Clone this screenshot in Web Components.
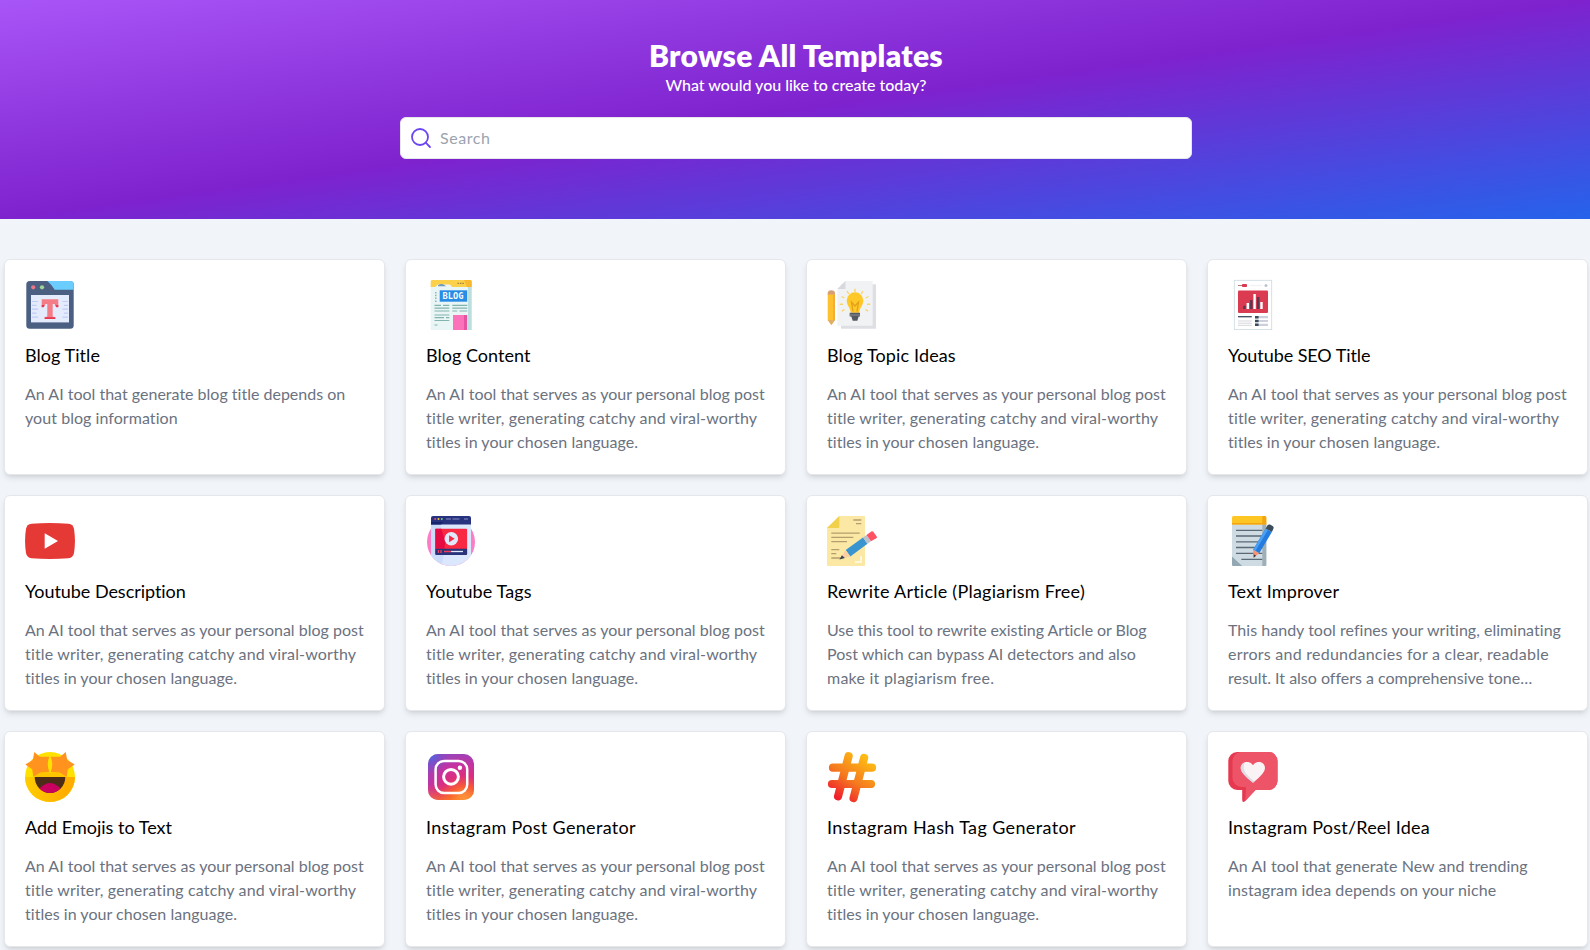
<!DOCTYPE html>
<html lang="en">
<head>
<meta charset="utf-8">
<title>Browse All Templates</title>
<style>
  html, body { margin: 0; height: 100%; overflow: hidden; }
  body { background: #f1f5f9; font-family: Lato, "Open Sans", sans-serif; font-size: 16px; line-height: 24px; }
</style>
</head>
<body>
<templates-page></templates-page>

<script>
/* One line of text, tracked so that it fills the given width. */
class FitLine extends HTMLElement {
  constructor() {
    super();
    this.attachShadow({ mode: 'open' }).innerHTML =
      '<style>:host{display:block;white-space:nowrap}span{display:inline-block;font-kerning:normal}</style><span><slot></slot></span>';
  }
  connectedCallback() {
    const span = this.shadowRoot.querySelector('span');
    const target = parseFloat(this.getAttribute('width'));
    const n = this.textContent.length;
    span.style.letterSpacing = '0.001px';
    const natural = span.getBoundingClientRect().width;
    const step = (target + 1 - natural) / n;
    span.style.letterSpacing = step.toFixed(3) + 'px';
  }
}

const ICONS = {
  title: `<rect x="1.3" y="1" width="47.4" height="47.7" rx="3.5" fill="#4a5f82"/>
    <path d="M22.3 1H45.5a3.2 3.2 0 0 1 3.2 3.2V9.7H29.7Q26.5 4.5 22.3 1Z" fill="#6bcdfd"/>
    <circle cx="8.2" cy="7.3" r="2.1" fill="#ed7685"/><circle cx="17" cy="7.3" r="2.1" fill="#9fd694"/>
    <rect x="6" y="15" width="38" height="27.4" fill="#e4ebfc"/>
    <path d="M7 21.5h6M7 25.3h4.5M7 29.2h6M7 33.2h4.5M7 37.2h6M37.5 21.5H43M39 25.3h4M37.5 29.2H43M39 33.2h4M37.5 37.2H43" stroke="#bfcdf5" stroke-width="1.2"/>
    <path d="M16.7 19.3H33.3V27H31L29.5 24H27.7V36.5L30.3 37.3V39H19.7V37.3L22.3 36.5V24H20.5L19 27H16.7Z" fill="#f37c86"/>
    <path d="M16.7 25h2.8l-.8 2.3h-2zM33.3 25h-2.8l.8 2.3h2zM19.7 37.2h10.6V39H19.7z" fill="#e63950"/>`,
  content: `<path d="M4.7 4H45.7V50H4.7z" fill="#eaf5f5"/><path d="M42 5h3.7v45H42z" fill="#bddedf"/>
    <path d="M6 0H44.2a1.5 1.5 0 0 1 1.5 1.5V7H26L24 4.5H12L9 7H4.7V1.5A1.5 1.5 0 0 1 6 0Z" fill="#fbd04a"/><path d="M38 0h6.2a1.5 1.5 0 0 1 1.5 1.5V7H41z" fill="#f9b92e"/>
    <path d="M12 5.2q4-3 8 1h-8z" fill="#6f9ab7" transform="translate(0 0)"/><path d="M31.5 3.4h7" stroke="#a7873a" stroke-width="1.3" stroke-dasharray="1.6 .8"/>
    <rect x="13.7" y="10.3" width="27.5" height="11.4" fill="#288be4"/>
    <text x="16.6" y="19.2" font-family="DejaVu Sans Mono" font-weight="700" font-size="8.8" textLength="21" lengthAdjust="spacingAndGlyphs" fill="#f4faff">BLOG</text>
    <path d="M9.8 12v10" stroke="#8eb2b6" stroke-width="1.5" stroke-dasharray="1.5 1.3"/>
    <path d="M8.5 25.4h6.5M17 25.4h6.3M8.5 28.2h14.8M8.5 31h14.8M26.3 25.4h15M26.3 28.2h15M26.3 31h5M33.5 31h7.8M8.5 35h14.8M8.5 37.7h9.5M20 37.7h3.3M8.5 40.5h14.8M8.5 45h3" stroke="#82b3ae" stroke-width="1.2"/>
    <path d="M27 35H41V50H27z" fill="#fb72ba"/><path d="M38 35h3.2v15H38z" fill="#e653a0"/>`,
  ideas: `<path d="M14 4.3H49V48.7H14z" fill="#dedfe3"/>
    <path d="M18.5 1H45.7V45.7H10.3V9z" fill="#f1f2f4"/><path d="M18.5 1V9H10.3z" fill="#d8d9de"/>
    <path d="M.7 14h7.3v26L4.4 45 .7 40z" fill="#fdc02f"/><path d="M.7 14.5v-1a3.65 3.3 0 0 1 7.3 0v1z" fill="#d4a074"/><path d="M.7 40H8L4.4 45z" fill="#e0ad68"/><path d="M6 15h2v25H6z" fill="#f6ac35"/>
    <path d="M19.7 20.5a8.3 8.3 0 0 1 16.6 0c0 5-3.6 7-4.1 12.2h-8.4c-.5-5.2-4.1-7.2-4.1-12.2z" fill="#ffc829"/>
    <path d="M26 31.5l-1.5-9.5 3.5 4 3.5-4-1.5 9.5" fill="none" stroke="#e5a018" stroke-width="1.3"/>
    <path d="M22.7 32.7H33v3.8h-1.3l-1.4 4.2h-4.6l-1.4-4.2h-1.6z" fill="#555960"/><path d="M22.7 35h10.3" stroke="#8b8f94"/>
    <path d="M28 12.2V8.7M21.8 14l-1.7-2.8M34.2 14l1.7-2.8M17.3 18l-2.8-1.5M38.7 18l2.8-1.5M16 24.2h-3.3M40 24.2h3.3M17.5 29.5l-2.6 1.7M38.5 29.5l2.6 1.7" stroke="#fbd36d" stroke-width="1.4"/>`,
  seo: `<rect x="6.3" y=".3" width="37.4" height="49.3" fill="#fff" stroke="#cbdbe2" stroke-width=".8"/>
    <path d="M10 5.5h4" stroke="#b47880" stroke-width="1"/><rect x="14" y="4" width="5" height="3" rx=".8" fill="#db3b51"/><path d="M22 5.5h12" stroke="#f1f1f4" stroke-width="1.2"/><circle cx="38" cy="5.5" r="1.5" fill="#bcc4cd"/>
    <rect x="10" y="10.5" width="30" height="22.5" rx="1" fill="#db3b51"/>
    <path d="M15.2 25.7h2.4V29h-2.4zM22.1 20h2.4v9h-2.4zM28.9 17h2.5v12h-2.5z" fill="#56394f"/><path d="M18.6 23H21v6h-2.4zM25.4 14h2.4v15h-2.4zM32.3 22h2.4v7h-2.4z" fill="#fff"/>
    <path d="M10 36.7h13.8" stroke="#3b4c5d" stroke-width="1.3"/><path d="M10 41h13.8M10 43.2h13.8M10 45.3h13.8" stroke="#d6d7dc" stroke-width="1"/>
    <path d="M27 37.2h13M27 41h13M27 44.8h13" stroke="#ccd0da" stroke-width="2.2"/><path d="M27 37.2h3.6M27 41h3.6M27 44.8h3.6" stroke="#394c60" stroke-width="2.4"/>`,
  youtube: `<path d="M6.5 7.8Q25 6.2 43.5 7.8Q48.2 8.4 49 13Q50.9 25 49 37Q48.2 41.6 43.5 42.2Q25 43.8 6.5 42.2Q1.8 41.6 1 37Q-.9 25 1 13Q1.8 8.4 6.5 7.8Z" fill="#e53935"/><path d="M19.7 17.3 33 25 19.7 32.7Z" fill="#fff"/>`,
  tags: `<circle cx="25" cy="26" r="24" fill="#fb7dc5"/>
    <path d="M5 7H45V39.2A24 24 0 0 1 5 39.2z" fill="#dae7fc"/><path d="M5 39A24 24 0 0 0 16 48.2L19 30 14 7H5z" fill="#cbdcfa"/>
    <path d="M7 0H43a2 2 0 0 1 2 2V8.6H5V2A2 2 0 0 1 7 0Z" fill="#28337f"/><path d="M5 6H17.5L15 8.6H5Z" fill="#16246d"/>
    <circle cx="9.2" cy="3" r="1" fill="#ef476f"/><circle cx="12.5" cy="3" r="1" fill="#f7c94c"/><circle cx="15.8" cy="3" r="1" fill="#73ce78"/><path d="M20 3h5M26.5 3h7M38 3h4" stroke="#6870ad" stroke-width="1.3"/>
    <rect x="9.3" y="12.7" width="31.8" height="26" rx="1" fill="#f92843"/><path d="M9.3 12.7h6l4 13-1 7h-9z" fill="#e60a43"/><path d="M9.3 32.8H41.1V38a1 1 0 0 1-1 .9H10.3a1 1 0 0 1-1-.9z" fill="#283379"/>
    <circle cx="25.3" cy="22.8" r="6.8" fill="#e0e9fb"/><path d="M23.1 19.3 28.7 22.8 23.1 26.2Z" fill="#f92843"/>
    <path d="M12.5 34v3M15 34v3M18 35.5h7" stroke="#ee405e" stroke-width="1.3"/><path d="M25 35.5h12" stroke="#e0e9fb" stroke-width="1.3"/>`,
  rewrite: `<path d="M12.3 0H37a1 1 0 0 1 1 1V49a1 1 0 0 1-1 1H1a1 1 0 0 1-1-1V12z" fill="#fbe8a5"/><path d="M12.3 0V11a1 1 0 0 1-1 1H0z" fill="#f1d04c"/>
    <path d="M26.3 4h8M29 7.7h5.3M4.3 17.2h28.4M4.3 21.4h22M4.3 25.7H20M4.3 33.7h8M4.3 37.7h5M4.3 42H14" stroke="#b39e6d" stroke-width="1.3"/><path d="M34 40v6h-6" fill="none" stroke="#fdf7dc" stroke-width="2"/>
    <path d="M18.7 34 36 21.5 40.5 27.8 23.3 40.4Z" fill="#3994d0"/><path d="M36 21.5 39.5 19 44 25.3 40.5 27.8Z" fill="#b9c1cb"/><path d="M39.5 19 44.3 15.5Q45.5 14.7 46.3 15.8L49.7 20.5Q50.4 21.5 49.2 22.3L44 25.3Z" fill="#ff5263"/>
    <path d="M18.7 34 23.3 40.4 12.5 43.4Z" fill="#fbcfa2"/><path d="M14.9 39.2 17.8 42 12.5 43.5Z" fill="#354449"/>`,
  improve: `<path d="M4 6H38.3V49a1 1 0 0 1-1 1H12L4 42z" fill="#cfdbe2"/><path d="M34.3 8h4v41a1 1 0 0 1-1 1h-3z" fill="#9eafb8"/><path d="M4 40.5 14.2 50H5a1 1 0 0 1-1-1z" fill="#93a8b3"/>
    <path d="M5.5 0H36.8a1.5 1.5 0 0 1 1.5 1.5V8.4H4V1.5A1.5 1.5 0 0 1 5.5 0Z" fill="#fdc623"/><path d="M34.3 0h2.5a1.5 1.5 0 0 1 1.5 1.5V8.4h-4zM4 7h34v1.4H4z" fill="#f5a411"/>
    <path d="M8 14.3h26.3M8 20h26.3M8 25.8h26.3M8 31.5h26.3M8 37.3h26.3M13.3 43.3h21" stroke="#596a76" stroke-width="1.3"/>
    <path d="M37.7 12.5 43.9 16 31.2 37.3 25.1 33.8Z" fill="#257cdf"/><path d="M37.7 12.5 40 13.8 27.4 35.1 25.1 33.8Z" fill="#4ca0f1"/><path d="M37.7 12.5 39.5 9.3Q40.4 8 42 8.6L44.6 10.1Q46.1 11 45.5 12.5L43.9 16Z" fill="#3b4d5b"/>
    <path d="M25.1 33.8 31.2 37.3 25.8 41.4Z" fill="#f69475"/><path d="M25.6 38.3 28.1 39.7 25.7 41.7Z" fill="#41343a"/>`,
  emoji: `<defs><linearGradient id="f" x1="0" y1="0" x2="1" y2="0"><stop offset="0" stop-color="#ffcd00"/><stop offset=".8" stop-color="#ffae00"/></linearGradient></defs>
    <circle cx="25" cy="25" r="25" fill="#ffe100"/><path d="M0 25A25 25 0 0 0 50 25Z" fill="url(#f)"/><path d="M9 25 16 20.4H34L41 25Z" fill="#ffc400"/>
    <g fill="#ff931e"><path d="M9.3 0 14.8 4.7 24.3 4.7Q21.2 12 24.3 20L15.5 20.4 8.3 25 7.2 17.3.3 12.5 7.8 8Z"/><path d="M40.7 0 35.2 4.7 25.7 4.7Q28.8 12 25.7 20L34.5 20.4 41.7 25 42.8 17.3 49.7 12.5 42.2 8Z"/></g>
    <path d="M9.7 25H40.3A15.3 16 0 0 1 9.7 25Z" fill="#4c2b17"/><path d="M14.5 36.5Q25 25.5 35.5 36.5Q31 41 25 41Q19 41 14.5 36.5Z" fill="#c8005f"/>`,
  instagram: `<defs><radialGradient id="g" gradientUnits="userSpaceOnUse" cx="38" cy="49" r="48"><stop offset="0" stop-color="#ffd06e"/><stop offset=".12" stop-color="#ffa944"/><stop offset=".3" stop-color="#f85c34"/><stop offset=".52" stop-color="#dd2e7c"/><stop offset=".76" stop-color="#c632a0"/><stop offset="1" stop-color="#9a44b8"/></radialGradient>
    <linearGradient id="o" x1="0" y1="1" x2="0" y2="0"><stop offset="0" stop-color="#fb7a25"/><stop offset=".35" stop-color="#f0503f" stop-opacity="0"/></linearGradient>
    <radialGradient id="b" gradientUnits="userSpaceOnUse" cx="3" cy="2" r="20"><stop offset="0" stop-color="#3770ed"/><stop offset="1" stop-color="#8046c7" stop-opacity="0"/></radialGradient></defs>
    <rect x="2" y="2" width="46" height="46" rx="10" fill="url(#g)"/><rect x="2" y="2" width="46" height="46" rx="10" fill="url(#o)" opacity=".7"/><rect x="2" y="2" width="46" height="46" rx="10" fill="url(#b)"/>
    <g fill="none" stroke="#fff"><rect x="9.6" y="9" width="31.6" height="32" rx="8.5" stroke-width="2.5"/><circle cx="25" cy="24.8" r="7.4" stroke-width="3"/></g><circle cx="33.9" cy="15.8" r="2.2" fill="#fff"/>`,
  hashtag: `<defs><linearGradient id="h" gradientUnits="userSpaceOnUse" x1="38" y1="5" x2="10" y2="45"><stop offset="0" stop-color="#fdbb13"/><stop offset=".55" stop-color="#f5791f"/><stop offset="1" stop-color="#ef202d"/></linearGradient></defs>
    <path d="M6 15.7H45M5 32H44M21.6 4.2 11.1 44.2M37.1 6 26.6 46" fill="none" stroke="url(#h)" stroke-width="8.2" stroke-linecap="round"/>`,
  reel: `<path d="M9 0H40.5a9 9 0 0 1 9 9V29a9 9 0 0 1-9 9H27.5L17 49.3Q14.3 51 14.2 48V38H9.3a9 9 0 0 1-9-9V9A9 9 0 0 1 9 0Z" fill="#e63950"/>
    <path d="M12 0H40.5a9 9 0 0 1 9 9V29a9 9 0 0 1-9 9H27.5L17.2 49Q18 39 17.8 35H13.5a9 9 0 0 1-9-9V9Q5 2 12 0Z" fill="#ee5468"/>
    <path d="M25 30.7Q12.7 21.5 12.7 16.3C12.7 9.5 21.5 8 25 13.3C28.5 8 37 9.5 37 16.3Q37 21.5 25 30.7Z" fill="#faf3f5"/><path d="M25 30.7Q12.7 21.5 12.7 16.3Q12.9 12 16.6 10.5C13 19 20 24 26.5 29.5Z" fill="#dedbe3"/>`
};

class ToolIcon extends HTMLElement {
  constructor() { super(); this.attachShadow({ mode: 'open' }); }
  connectedCallback() {
    this.shadowRoot.innerHTML = `<style>:host{display:block;width:50px;height:50px}svg{display:block;overflow:visible}</style>
      <svg width="50" height="50" viewBox="0 0 50 50" aria-hidden="true">${ICONS[this.getAttribute('name')]}</svg>`;
  }
}

class TemplateCard extends HTMLElement {
  constructor() {
    super();
    this.attachShadow({ mode: 'open' }).innerHTML = `<style>
      :host{display:flex;flex-direction:column;box-sizing:border-box;height:216px;padding:20px;background:#fff;border:1px solid #e5e7eb;border-radius:6px;
        box-shadow:0 4px 6px -1px rgba(0,0,0,.1),0 2px 4px -2px rgba(0,0,0,.1);cursor:pointer}
      h2{margin:11px 0 13px;font-size:18px;line-height:28px;font-weight:400;color:#000}
      .desc{color:#6b7280;line-height:24px}
      </style><slot name="icon"></slot><h2><slot name="title"></slot></h2><div class="desc"><slot></slot></div>`;
  }
}

class SearchHero extends HTMLElement {
  constructor() {
    super();
    this.attachShadow({ mode: 'open' }).innerHTML = `<style>
      :host{display:flex;flex-direction:column;align-items:center;box-sizing:border-box;height:219px;padding:37px 0 0 2px;color:#fff;
        background:linear-gradient(to bottom right,#a855f7,#7e22ce,#2563eb)}
      h1{margin:0;font-size:30px;line-height:36px;font-weight:800}
      p{margin:0 0 20px;font-weight:500}
      .box{display:flex;align-items:center;gap:7px;box-sizing:border-box;width:792px;height:42px;padding:8px;background:#fff;border:1px solid #e5e7eb;border-radius:6px;color:#9ca3af}
      </style>
      <h1><fit-line width="293">Browse All Templates</fit-line></h1>
      <p><fit-line width="260">What would you like to create today?</fit-line></p>
      <div class="box">
        <svg width="24" height="24" viewBox="0 0 24 24" fill="none" stroke="#6c47f0" stroke-width="1.8" stroke-linecap="round" stroke-linejoin="round"><circle cx="11" cy="11" r="8"/><path d="m21 21-4.3-4.3"/></svg>
        <fit-line width="49.5">Search</fit-line>
      </div>`;
  }
}

const COMMON = [['An AI tool that serves as your personal blog post', 337.7], ['title writer, generating catchy and viral-worthy', 330.3], ['titles in your chosen language.', 211]];
const TEMPLATES = [
  ['title', 'Blog Title', 74, [['An AI tool that generate blog title depends on', 319.3], ['yout blog information', 151.7]]],
  ['content', 'Blog Content', 103.4, COMMON],
  ['ideas', 'Blog Topic Ideas', 127.8, COMMON],
  ['seo', 'Youtube SEO Title', 141.5, COMMON],
  ['youtube', 'Youtube Description', 159.8, COMMON],
  ['tags', 'Youtube Tags', 104.7, COMMON],
  ['rewrite', 'Rewrite Article (Plagiarism Free)', 257, [['Use this tool to rewrite existing Article or Blog', 318.6], ['Post which can bypass AI detectors and also', 308], ['make it plagiarism free.', 166.2]]],
  ['improve', 'Text Improver', 110.2, [['This handy tool refines your writing, eliminating', 332], ['errors and redundancies for a clear, readable', 320], ['result. It also offers a comprehensive tone…', 303.2]]],
  ['emoji', 'Add Emojis to Text', 146, COMMON],
  ['instagram', 'Instagram Post Generator', 209, COMMON],
  ['hashtag', 'Instagram Hash Tag Generator', 248, COMMON],
  ['reel', 'Instagram Post/Reel Idea', 201, [['An AI tool that generate New and trending', 298.7], ['instagram idea depends on your niche', 267.3]]]
];

class TemplatesPage extends HTMLElement {
  constructor() {
    super();
    this.attachShadow({ mode: 'open' }).innerHTML = `<style>
      :host{display:block}
      main{display:grid;grid-template-columns:repeat(4,381px);gap:20px;padding:40px 0 20px 4px}
      </style><search-hero></search-hero><main>` +
      TEMPLATES.map(([icon, name, width, lines]) => `<template-card><tool-icon slot="icon" name="${icon}"></tool-icon><fit-line slot="title" width="${width}">${name}</fit-line>${
        lines.map(([text, w]) => `<fit-line width="${w}">${text}</fit-line>`).join('')}</template-card>`).join('') + '</main>';
  }
}

customElements.define('tool-icon', ToolIcon);
customElements.define('template-card', TemplateCard);
customElements.define('search-hero', SearchHero);
customElements.define('templates-page', TemplatesPage);
customElements.define('fit-line', FitLine);
</script>
</body>
</html>
